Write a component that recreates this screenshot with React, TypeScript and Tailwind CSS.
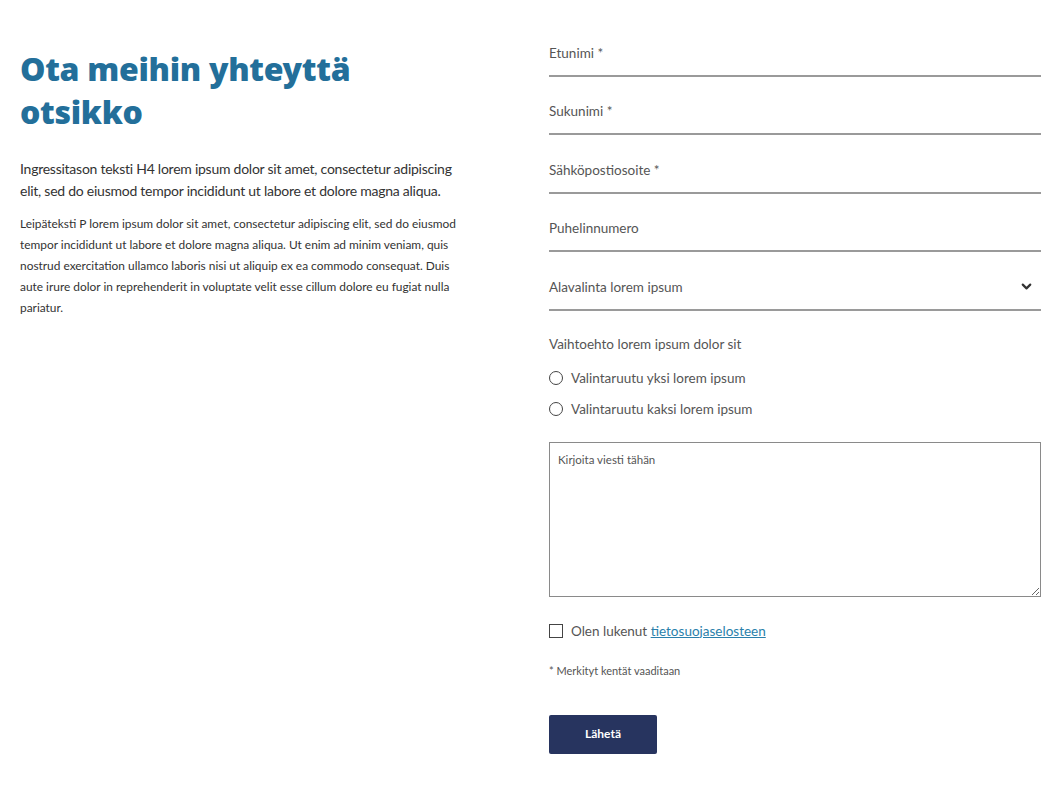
import { ChevronDown } from "lucide-react";

const fields = ["Etunimi *", "Sukunimi *", "Sähköpostiosoite *", "Puhelinnumero"];

const App = () => {
  return (
    <div
      className="min-h-screen bg-white flex px-[20px] pt-[18px] text-[#444]"
      style={{ fontFamily: "Lato, 'Noto Sans', sans-serif" }}
    >
      {/* vasen palsta */}
      <div className="w-[470px] pt-[29px]">
        <h1
          className="text-[32px] leading-[43px] font-black text-[#236f9a] tracking-[-0.3px]"
          style={{ fontFamily: "'Noto Sans', Lato, sans-serif" }}
        >
          Ota meihin yhteyttä
          <br />
          otsikko
        </h1>
        <p className="mt-[25px] text-[14px] leading-[22px] tracking-[-0.25px] text-[#333] whitespace-nowrap">
          Ingressitason teksti H4 lorem ipsum dolor sit amet, consectetur adipiscing
          <br />
          elit, sed do eiusmod tempor incididunt ut labore et dolore magna aliqua.
        </p>
        <p className="mt-[11px] text-[11.9px] leading-[21px] text-[#333] whitespace-nowrap">
          Leipäteksti P lorem ipsum dolor sit amet, consectetur adipiscing elit, sed do eiusmod
          <br />
          tempor incididunt ut labore et dolore magna aliqua. Ut enim ad minim veniam, quis
          <br />
          nostrud exercitation ullamco laboris nisi ut aliquip ex ea commodo consequat. Duis
          <br />
          aute irure dolor in reprehenderit in voluptate velit esse cillum dolore eu fugiat nulla
          <br />
          pariatur.
        </p>
      </div>

      {/* lomake */}
      <form className="ml-auto w-[492px] flex flex-col text-[#555]">
        {fields.map((f) => (
          <div key={f} className="pt-[24.5px] pb-[12px] border-b-2 border-[#9a9a9a] text-[13.5px] leading-[20px]">
            {f}
          </div>
        ))}
        <div className="pt-[24.5px] pb-[12px] border-b-2 border-[#9a9a9a] text-[13.5px] leading-[20px] flex items-center justify-between">
          <span>Alavalinta lorem ipsum</span>
          <ChevronDown size={15} strokeWidth={3.5} className="text-[#333] mr-[7px]" />
        </div>

        <div className="mt-[23px] text-[13.5px] leading-[20px]">Vaihtoehto lorem ipsum dolor sit</div>
        <div className="mt-[14px] flex flex-col gap-[11px] text-[13.5px] leading-[20px]">
          {["Valintaruutu yksi lorem ipsum", "Valintaruutu kaksi lorem ipsum"].map((r) => (
            <label key={r} className="flex items-center gap-[8px]">
              <span className="w-[14px] h-[14px] rounded-full border border-[#444]" />
              {r}
            </label>
          ))}
        </div>

        <textarea
          placeholder="Kirjoita viesti tähän"
          className="mt-[23px] h-[155px] border border-[#8a8a8a] px-[8px] py-[9px] text-[11.5px] leading-[16px] placeholder:text-[#555] outline-none"
        />

        <label className="mt-[24px] flex items-center gap-[8px] text-[13.5px] leading-[20px]">
          <span className="w-[14px] h-[14px] border border-[#444]" />
          <span>
            Olen lukenut{" "}
            <a href="#" className="text-[#2a7fab] underline">
              tietosuojaselosteen
            </a>
          </span>
        </label>

        <div className="mt-[22px] text-[11px] leading-[16px]">* Merkityt kentät vaaditaan</div>

        <button
          type="button"
          className="mt-[36px] w-[108px] h-[39px] rounded-[2px] bg-[#27345f] text-white text-[12px] font-bold"
        >
          Lähetä
        </button>
      </form>
    </div>
  );
};

export default App;
